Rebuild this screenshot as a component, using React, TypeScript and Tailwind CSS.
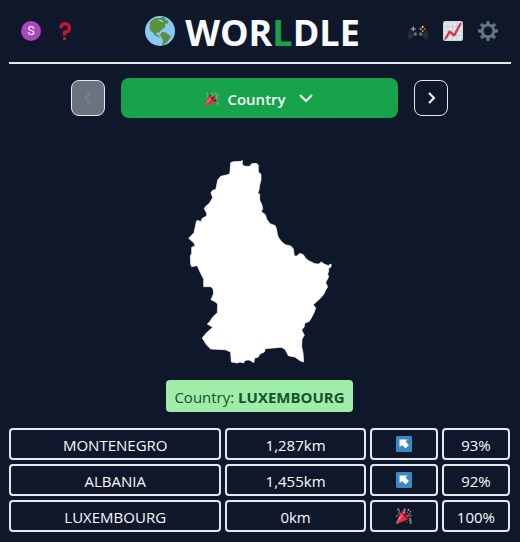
import type { ReactNode } from "react";

type Guess = { name: string; distance: string; result: "northwest" | "win"; percent: string };

const guesses: Guess[] = [
  { name: "MONTENEGRO", distance: "1,287km", result: "northwest", percent: "93%" },
  { name: "ALBANIA", distance: "1,455km", result: "northwest", percent: "92%" },
  { name: "LUXEMBOURG", distance: "0km", result: "win", percent: "100%" },
];

function Emoji({ className, children }: { className: string; children: ReactNode }) {
  return (
    <svg viewBox="0 0 36 36" className={className} aria-hidden="true">
      {children}
    </svg>
  );
}

function Popper({ className }: { className: string }) {
  return (
    <Emoji className={className}>
      <path fill="#DD2E44" d="M11.626 7.488c-.112.112-.197.247-.268.395l-.008-.008L.134 33.141l.011.011c-.208.403.14 1.223.853 1.937.713.713 1.533 1.061 1.936.853l.01.01L28.21 24.735l-.008-.009c.147-.07.282-.155.395-.269 1.562-1.562-.971-6.627-5.656-11.313-4.687-4.686-9.752-7.218-11.315-5.656z" />
      <path fill="#EA596E" d="M13 12L.416 32.506l-.282.635.011.011c-.208.403.14 1.223.853 1.937.232.232.473.408.709.557L17 17l-4-5z" />
      <path fill="#A0041E" d="M23.012 13.066c4.67 4.672 7.263 9.652 5.789 11.124-1.473 1.474-6.453-1.118-11.126-5.788-4.671-4.672-7.263-9.654-5.79-11.127 1.474-1.473 6.454 1.119 11.127 5.791z" />
      <path fill="#AA8DD8" d="M18.59 13.609c-.199.161-.459.245-.734.215-.868-.094-1.598-.396-2.109-.873-.541-.505-.808-1.183-.735-1.862.128-1.192 1.324-2.286 3.363-2.066.793.085 1.147-.17 1.159-.292.014-.121-.277-.446-1.07-.532-.868-.094-1.598-.396-2.11-.873-.541-.505-.809-1.183-.735-1.862.13-1.192 1.325-2.286 3.362-2.065.578.062.883-.057 1.012-.134.103-.063.144-.123.148-.158.012-.121-.275-.446-1.07-.532-.549-.06-.947-.552-.886-1.102.059-.549.55-.946 1.101-.886 2.037.219 2.973 1.542 2.844 2.735-.13 1.194-1.325 2.286-3.364 2.067-.578-.063-.88.057-1.01.134-.103.062-.145.123-.149.157-.013.122.276.446 1.071.532 2.037.22 2.973 1.542 2.844 2.735-.129 1.192-1.324 2.286-3.362 2.065-.578-.062-.882.058-1.012.134-.104.064-.144.124-.148.158-.013.121.276.446 1.07.532.548.06.947.553.886 1.102-.028.274-.167.511-.366.671z" />
      <path fill="#77B255" d="M30.661 22.857c1.973-.557 3.334.323 3.658 1.478.324 1.154-.378 2.615-2.35 3.17-.77.216-1.001.584-.97.701.034.118.425.312 1.193.095 1.972-.555 3.333.325 3.657 1.479.326 1.155-.378 2.614-2.351 3.17-.769.216-1.001.585-.967.702.033.117.423.311 1.192.095.53-.149 1.084.16 1.233.691.148.532-.161 1.084-.693 1.234-1.971.555-3.333-.323-3.659-1.479-.324-1.154.379-2.613 2.353-3.169.77-.217 1.001-.584.967-.702-.032-.117-.422-.312-1.19-.096-1.974.556-3.334-.322-3.659-1.479-.325-1.154.378-2.613 2.351-3.17.768-.215.999-.585.967-.701-.034-.118-.423-.312-1.192-.096-.532.15-1.083-.16-1.233-.691-.149-.53.161-1.082.693-1.232z" />
      <path fill="#AA8DD8" d="M23.001 20.16c-.294 0-.584-.129-.782-.375-.345-.432-.274-1.061.156-1.406.218-.175 5.418-4.259 12.767-3.208.547.078.927.584.849 1.131-.078.546-.58.93-1.132.848-6.493-.922-11.187 2.754-11.233 2.791-.186.148-.406.219-.625.219z" />
      <path fill="#77B255" d="M5.754 16c-.095 0-.192-.014-.288-.042-.529-.159-.829-.716-.67-1.245 1.133-3.773 2.16-9.794.898-11.364-.141-.178-.354-.353-.842-.316-.938.072-.849 2.051-.848 2.071.042.551-.372 1.031-.922 1.072-.559.034-1.031-.372-1.072-.923-.103-1.379.326-4.035 2.692-4.214 1.056-.08 1.933.287 2.552 1.057 2.371 2.951-.036 11.506-.542 13.192-.13.433-.528.712-.958.712z" />
      <g fill="#5C913B">
        <circle cx="25.5" cy="9.5" r="1.5" />
        <circle cx="32.5" cy="19.5" r="1.5" />
        <circle cx="23.5" cy="31.5" r="1.5" />
      </g>
      <circle cx="2" cy="18" r="2" fill="#9266CC" />
      <g fill="#FFCC4D">
        <circle cx="28" cy="4" r="2" />
        <circle cx="32.5" cy="8.5" r="1.5" />
        <circle cx="29.5" cy="12.5" r="1.5" />
        <circle cx="7.5" cy="23.5" r="1.5" />
      </g>
    </Emoji>
  );
}

function NorthwestArrow() {
  return (
    <Emoji className="size-4">
      <rect width="36" height="36" rx="3" fill="#3B88C3" />
      <path fill="#fff" d="M8 8h18l-4.500 4.500 7.500 7.500-7.500 8-8-8L8 25.500z" />
    </Emoji>
  );
}

function QuestionMark() {
  return (
    <Emoji className="size-5">
      <g fill="#BE1931">
        <path d="M17 27c-1.657 0-3-1.343-3-3v-4c0-1.657 1.343-3 3-3 .603-.006 6-1 6-5 0-2-2-4-5-4-2.441 0-4 2-4 3 0 1.657-1.343 3-3 3s-3-1.343-3-3c0-4.878 4.580-9 10-9 8 0 11 5.982 11 11 0 4.145-2.277 7.313-6.413 8.920-.9.351-1.790.587-2.587.747V24c0 1.657-1.343 3-3 3z" />
        <circle cx="17" cy="32" r="3" />
      </g>
    </Emoji>
  );
}

function Globe() {
  return (
    <Emoji className="size-[30px]">
      <circle cx="18" cy="18" r="18" fill="#88C9F9" />
      <g fill="#5C913B">
        <path d="M5.800 7.500L8.500 4.800 11.500 3l3-.5 3 .2 2-1 2.500-.5 2.500 1.300-.5 1.500 3 1.500 1.500 2-2 2-2-.5-.8 2.500.8 2-2.500 1.500-2 1.500-2 2-.5 2-1.500-1-2 .5-.5 2 1.500.8 1.300-.8-.2 2 2 1-1 .8-3-1.500-3-1.500-1.500-3-2.800-1.500-1.200-3 .2-2.500z" />
        <path d="M19 20.500l2.500-1.300 4 .5 2 2.500 3.300 1.500-.5 3-2.300 2-1 2.500-2.500 1.500-1.500 2-2 .6-.7-.8 1.200-3-.3-4-1.700-1.500-1.200-2.500z" />
      </g>
      <path fill="#88C9F9" d="M16 5l2.500-.8 1.500 1.300 2.500.5-1.500 1.500-3-.8z" />
    </Emoji>
  );
}

function Gamepad() {
  return (
    <Emoji className="size-5">
      <path fill="#292F33" d="M3 14l-1.500 6C.5 23 0 26 0 29c0 4.500 4.500 5.500 6.500 2.500L11 26h14l4.500 5.500c2 3 6.500 2 6.500-2.500 0-3-.5-6-1.500-9L33 14z" />
      <path fill="#17191B" d="M3 14c.5-3 1.500-5 3-6 1-1.300 6-1.300 7 0l1 1.500h8L23 8c1-1.300 6-1.300 7 0 1.500 1 2.500 3 3 6l-3 7-4 4H10l-4-4z" />
      <path fill="#8899A6" d="M8.300 10h2.600v3h3v2.600h-3v3H8.300v-3h-3V13h3z" />
      <circle cx="13" cy="23.500" r="3.200" fill="#66757F" />
      <circle cx="23" cy="23.500" r="3.200" fill="#66757F" />
      <circle cx="26.500" cy="10.500" r="2" fill="#FFCC4D" />
      <circle cx="22.800" cy="14.300" r="2" fill="#55ACEE" />
      <circle cx="30.200" cy="14.300" r="2" fill="#DD2E44" />
      <circle cx="26.500" cy="18" r="2" fill="#77B255" />
    </Emoji>
  );
}

function Chart() {
  return (
    <Emoji className="size-5">
      <rect width="36" height="36" rx="4" fill="#CCD6DD" />
      <rect x="2" y="2" width="32" height="32" rx="2" fill="#E1E8ED" />
      <path stroke="#BFCBD3" strokeWidth="1.500" d="M9 2v32M17 2v32M25 2v32M2 10h32M2 18h32M2 26h32" />
      <path fill="none" stroke="#DD2E44" strokeWidth="4" strokeLinecap="round" strokeLinejoin="round" d="M4.500 31.500L12 19l8 7L31.500 5" />
    </Emoji>
  );
}

function Gear() {
  return (
    <Emoji className="size-5">
      <path fill="#66757F" d="M34 15h-3.362c-.324-1.369-.864-2.651-1.582-3.814l2.379-2.379c.781-.781.781-2.048 0-2.829l-1.414-1.414c-.781-.781-2.047-.781-2.828 0l-2.379 2.379C23.650 6.225 22.369 5.686 21 5.362V2c0-1.104-.896-2-2-2h-2c-1.104 0-2 .896-2 2v3.362c-1.369.324-2.651.864-3.814 1.582L8.808 4.565c-.781-.781-2.048-.781-2.828 0L4.565 5.979c-.781.781-.781 2.048-.001 2.829l2.379 2.379C6.225 12.350 5.686 13.632 5.362 15H2c-1.104 0-2 .896-2 2v2c0 1.104.896 2 2 2h3.362c.324 1.368.864 2.650 1.582 3.813l-2.379 2.379c-.78.78-.78 2.048.001 2.829l1.414 1.414c.78.78 2.047.78 2.828 0l2.379-2.379c1.163.719 2.445 1.258 3.814 1.582V34c0 1.104.896 2 2 2h2c1.104 0 2-.896 2-2v-3.362c1.368-.324 2.650-.864 3.813-1.582l2.379 2.379c.781.781 2.047.781 2.828 0l1.414-1.414c.781-.781.781-2.048 0-2.829l-2.379-2.379c.719-1.163 1.258-2.445 1.582-3.814H34c1.104 0 2-.896 2-2v-2C36 15.896 35.104 15 34 15zM18 26c-4.418 0-8-3.582-8-8s3.582-8 8-8 8 3.582 8 8-3.582 8-8 8z" />
    </Emoji>
  );
}

function Chevron({ d, className }: { d: string; className: string }) {
  return (
    <svg viewBox="0 0 16 16" className={className} fill="none" stroke="currentColor" strokeWidth="2" aria-hidden="true">
      <path d={d} />
    </svg>
  );
}

function CountryShape() {
  return (
    <svg viewBox="15 30 450 612" className="h-[204px] w-[150px]" role="img" aria-label="Country to guess">
      <path
        fill="#fff"
        stroke="#fff"
        strokeLinejoin="round"
        strokeWidth="2"
        d="M152 38L160 35 184 34 187 31 187 44 195 49 209 49 215 41 229 40 235 45 235 66 243 73 243 90 239 105 237 120 233 130 239 132 239 150 245 163 248 176 244 185 256 194 260 207 270 221 286 227 290 240 292 252 295 262 305 275 316 284 332 288 340 296 343 318 350 318 360 310 370 314 376 324 386 332 405 341 416 342 424 336 434 343 446 347 450 342 454 344 452 352 446 355 446 364 443 372 446 380 437 398 443 410 436 422 432 432 422 444 400 464 407 474 403 486 396 500 388 514 374 520 373 530 365 540 373 556 366 568 365 590 369 608 371 636 360 632 346 622 340 620 325 617 320 607 315 598 304 592 290 593 256 596 253 606 240 612 234 622 224 624 221 638 212 632 206 630 196 631 190 639 180 636 172 639 154 636 152 606 140 601 135 599 92 597 80 585 67 564 78 550 98 532 82 522 90 514 99 500 112 488 113 462 105 455 93 449 101 430 99 416 92 410 71 410 71 388 62 370 53 350 50 347 35 350 32 342 31 318 35 310 35 292 45 288 42 279 26 265 42 248 47 225 49 214 53 211 62 215 67 205 80 198 80 190 73 176 76 170 88 160 98 143 93 128 97 122 108 117 113 90 122 79 148 73 150 66z"
      />
    </svg>
  );
}

export default function App() {
  return (
    <div className="min-h-screen bg-[#0f172a] px-[9px] pb-2 font-['Open_Sans','Noto_Sans',sans-serif] text-base text-slate-50">
      <header className="flex h-16 items-center justify-between border-b-2 border-gray-200 px-3">
        <div className="flex w-[76px] items-center gap-[14px]">
          <button type="button" aria-label="Account" className="flex size-5 items-center justify-center rounded-full bg-[#ab47bc] font-[Roboto,sans-serif] text-xs leading-5">
            S
          </button>
          <button type="button" aria-label="How to play">
            <QuestionMark />
          </button>
        </div>
        <h1 className="flex items-center gap-[10px] text-4xl font-bold">
          <Globe />
          <span className="pt-1">
            WOR<span className="text-[#16a34a]">L</span>DLE
          </span>
        </h1>
        <div className="flex items-center gap-[15px] pr-px">
          <button type="button" aria-label="Other games">
            <Gamepad />
          </button>
          <button type="button" aria-label="Statistics">
            <Chart />
          </button>
          <button type="button" aria-label="Settings">
            <Gear />
          </button>
        </div>
      </header>

      <main className="pr-px">
        <div className="mx-auto mt-[14px] flex max-w-[377px] items-center gap-4">
          <button type="button" disabled aria-label="Previous round" className="flex h-9 w-[34px] items-center justify-center rounded-lg border border-gray-200 bg-[#6b7280] text-[#85817c]">
            <Chevron d="M10 3L5 8l5 5" className="size-4" />
          </button>
          <button type="button" aria-haspopup="listbox" className="flex h-10 flex-1 items-center justify-center rounded-lg bg-[#16a34a] pt-0.5 text-[15px] font-semibold">
            <Popper className="mr-2 size-[14px]" />
            Country
            <Chevron d="M2 4l6 6 6-6" className="ml-3 size-4" />
          </button>
          <button type="button" aria-label="Next round" className="flex h-9 w-[34px] items-center justify-center rounded-lg border border-gray-200">
            <Chevron d="M6 3l5 5-5 5" className="size-4" />
          </button>
        </div>

        <div className="mt-[42px] flex justify-center">
          <CountryShape />
        </div>

        <div className="mt-4 flex justify-center">
          <p className="rounded bg-[#9feda8] px-2 pt-[5px] pb-[3px] text-[15px] leading-6 text-[#14532d]">
            Country: <strong>LUXEMBOURG</strong>
          </p>
        </div>

        <table className="mt-4 block text-center text-[15px] leading-[26px]" aria-label="Guesses">
          <tbody className="grid gap-1">
            {guesses.map((g) => (
              <tr key={g.name} className="grid grid-cols-7 gap-1">
                <td className="col-span-3 rounded border-2 border-gray-200 pt-0.5">{g.name}</td>
                <td className="col-span-2 rounded border-2 border-gray-200 pt-0.5">{g.distance}</td>
                <td className="flex items-center justify-center rounded border-2 border-gray-200">
                  {g.result === "win" ? <Popper className="size-4" /> : <NorthwestArrow />}
                </td>
                <td className="rounded border-2 border-gray-200 pt-0.5">{g.percent}</td>
              </tr>
            ))}
          </tbody>
        </table>
      </main>
    </div>
  );
}
